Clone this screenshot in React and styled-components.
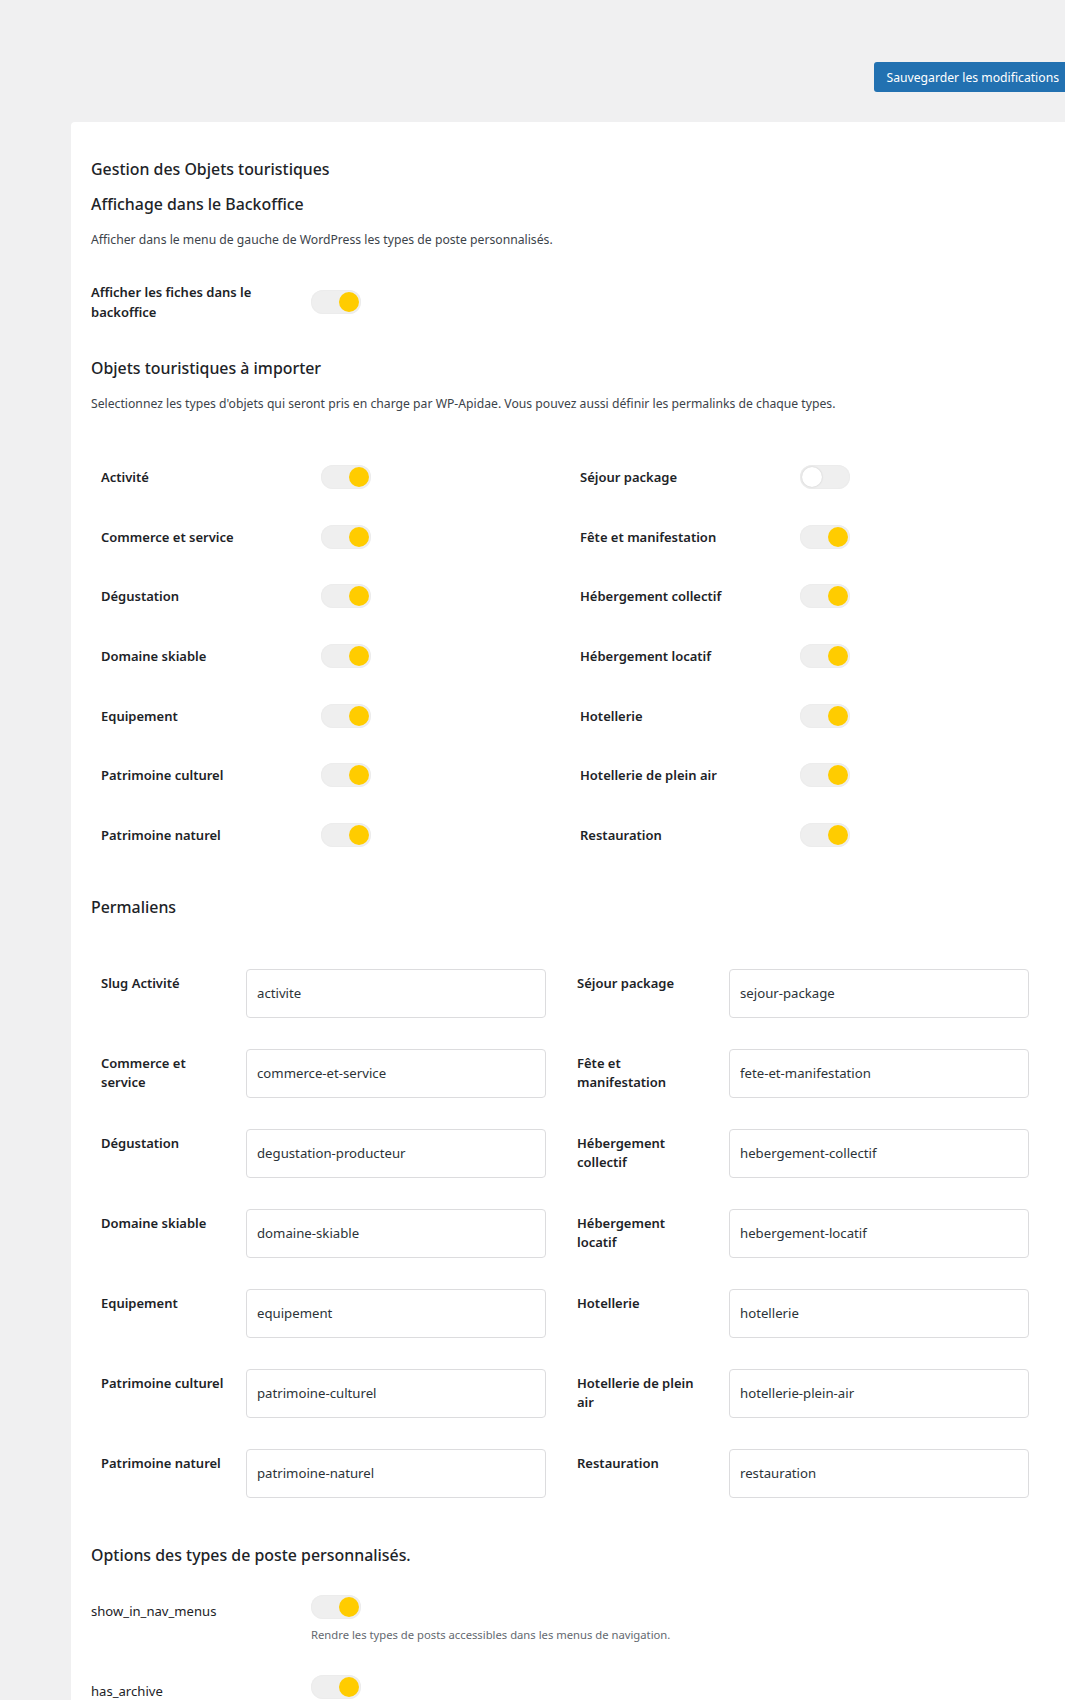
import React from 'react';
import styled, { createGlobalStyle } from 'styled-components';

const GlobalStyle = createGlobalStyle`
  html, body {
    margin: 0;
    padding: 0;
    background: #f0f0f1;
    overflow-x: hidden;
  }
  body {
    font-family: "Noto Sans", "Open Sans", sans-serif;
    color: #1d2327;
  }
  * {
    box-sizing: border-box;
  }
`;

const Page = styled.div`
  width: 1065px;
  overflow: hidden;
  padding-left: 71px;
`;

const Toolbar = styled.div`
  display: flex;
  justify-content: flex-end;
  padding-top: 62px;
  margin-right: -6px;
`;

const SaveButton = styled.button`
  height: 30px;
  padding: 0 12px;
  border: 0;
  border-radius: 3px;
  background: #2271b1;
  color: #fff;
  font-family: inherit;
  font-size: 12.2px;
  white-space: nowrap;
  cursor: pointer;
`;

const Panel = styled.div`
  margin-top: 30px;
  margin-right: -40px;
  background: #fff;
  border-radius: 4px 0 0 0;
  padding: 35px 20px 40px 20px;
`;

const Heading = styled.h2`
  margin: ${(p) => p.$top || 0}px 0 0 0;
  font-size: 15.9px;
  line-height: 24px;
  font-weight: 500;
  color: #1d2327;
`;

const Description = styled.p`
  margin: 14px 0 0 0;
  font-size: 12.2px;
  line-height: 20px;
  color: #3c434a;
`;

const Label = styled.div`
  width: ${(p) => p.$width || 200}px;
  flex-shrink: 0;
  font-size: 13px;
  line-height: 20px;
  font-weight: 600;
  color: #1d2327;
`;

const SettingRow = styled.div`
  display: flex;
  align-items: center;
  margin-top: ${(p) => p.$gap || 0}px;
  gap: 20px;
`;

const Track = styled.span`
  position: relative;
  display: inline-block;
  flex-shrink: 0;
  width: 50px;
  height: 24px;
  border-radius: 12px;
  background: #efefef;
  box-shadow: inset 0 0 0 1px #ececec;
`;

const Knob = styled.span`
  position: absolute;
  top: 2px;
  left: ${(p) => (p.$on ? 28 : 2)}px;
  width: 20px;
  height: 20px;
  border-radius: 50%;
  background: ${(p) => (p.$on ? '#ffcc00' : '#fff')};
  box-shadow: ${(p) => (p.$on ? 'none' : '0 0 2px rgba(0,0,0,0.18)')};
`;

const Toggle = ({ on = true }) => (
  <Track>
    <Knob $on={on} />
  </Track>
);

const ToggleGrid = styled.div`
  display: grid;
  grid-template-columns: 479px 479px;
  grid-auto-rows: 59.7px;
  padding-left: 10px;
  margin-top: 33px;
`;

const ToggleCell = styled.div`
  display: flex;
  align-items: center;
`;

const PermaGrid = styled.div`
  display: grid;
  grid-template-columns: 476px 476px;
  row-gap: 31px;
  padding-left: 10px;
  margin-top: 50px;
`;

const PermaField = styled.div`
  display: grid;
  grid-template-columns: ${(p) => p.$labelWidth}px 300px;
  align-items: start;
`;

const PermaLabel = styled.label`
  padding: 5px ${(p) => p.$padRight}px 0 0;
  font-size: 13px;
  line-height: 19px;
  font-weight: 600;
  color: #1d2327;
`;

const TextInput = styled.input`
  width: 300px;
  height: 49px;
  padding: 0 10px;
  border: 1px solid #dcdcde;
  border-radius: 4px;
  background: #fff;
  font-family: inherit;
  font-size: 13.2px;
  color: #2c3338;
  outline: none;
`;

const OptionRow = styled.div`
  display: flex;
  gap: 20px;
  margin-top: ${(p) => p.$gap}px;
`;

const OptionLabel = styled(Label)`
  padding-top: 6px;
  font-weight: 400;
  font-size: 13.1px;
`;

const OptionControl = styled.div`
  display: flex;
  flex-direction: column;
  align-items: flex-start;
`;

const Help = styled.p`
  margin: 8px 0 0 0;
  font-size: 11.25px;
  line-height: 16px;
  color: #646970;
`;

const objets = [
  ['Activité', true, 'Séjour package', false],
  ['Commerce et service', true, 'Fête et manifestation', true],
  ['Dégustation', true, 'Hébergement collectif', true],
  ['Domaine skiable', true, 'Hébergement locatif', true],
  ['Equipement', true, 'Hotellerie', true],
  ['Patrimoine culturel', true, 'Hotellerie de plein air', true],
  ['Patrimoine naturel', true, 'Restauration', true],
];

const permaliens = [
  ['Slug Activité', 'activite', 'Séjour package', 'sejour-package'],
  ['Commerce et service', 'commerce-et-service', 'Fête et manifestation', 'fete-et-manifestation'],
  ['Dégustation', 'degustation-producteur', 'Hébergement collectif', 'hebergement-collectif'],
  ['Domaine skiable', 'domaine-skiable', 'Hébergement locatif', 'hebergement-locatif'],
  ['Equipement', 'equipement', 'Hotellerie', 'hotellerie'],
  ['Patrimoine culturel', 'patrimoine-culturel', 'Hotellerie de plein air', 'hotellerie-plein-air'],
  ['Patrimoine naturel', 'patrimoine-naturel', 'Restauration', 'restauration'],
];

const App = () => {
  return (
    <>
      <GlobalStyle />
      <Page>
        <Toolbar>
          <SaveButton>Sauvegarder les modifications</SaveButton>
        </Toolbar>
        <Panel>
          <Heading>Gestion des Objets touristiques</Heading>
          <Heading $top={11}>Affichage dans le Backoffice</Heading>
          <Description>
            Afficher dans le menu de gauche de WordPress les types de poste personnalisés.
          </Description>
          <SettingRow $gap={32}>
            <Label $width={200}>Afficher les fiches dans le backoffice</Label>
            <Toggle />
          </SettingRow>

          <Heading $top={34}>Objets touristiques à importer</Heading>
          <Description>
            Selectionnez les types d'objets qui seront pris en charge par WP-Apidae. Vous pouvez
            aussi définir les permalinks de chaque types.
          </Description>
          <ToggleGrid>
            {objets.map(([left, leftOn, right, rightOn]) => (
              <React.Fragment key={left}>
                <ToggleCell>
                  <Label $width={220}>{left}</Label>
                  <Toggle on={leftOn} />
                </ToggleCell>
                <ToggleCell>
                  <Label $width={220}>{right}</Label>
                  <Toggle on={rightOn} />
                </ToggleCell>
              </React.Fragment>
            ))}
          </ToggleGrid>

          <Heading $top={30}>Permaliens</Heading>
          <PermaGrid>
            {permaliens.map(([left, leftSlug, right, rightSlug]) => (
              <React.Fragment key={left}>
                <PermaField $labelWidth={145}>
                  <PermaLabel $padRight={18}>{left}</PermaLabel>
                  <TextInput defaultValue={leftSlug} />
                </PermaField>
                <PermaField $labelWidth={152}>
                  <PermaLabel $padRight={22}>{right}</PermaLabel>
                  <TextInput defaultValue={rightSlug} />
                </PermaField>
              </React.Fragment>
            ))}
          </PermaGrid>

          <Heading $top={45}>Options des types de poste personnalisés.</Heading>
          <OptionRow $gap={28}>
            <OptionLabel $width={200}>show_in_nav_menus</OptionLabel>
            <OptionControl>
              <Toggle />
              <Help>Rendre les types de posts accessibles dans les menus de navigation.</Help>
            </OptionControl>
          </OptionRow>
          <OptionRow $gap={32}>
            <OptionLabel $width={200}>has_archive</OptionLabel>
            <OptionControl>
              <Toggle />
            </OptionControl>
          </OptionRow>
        </Panel>
      </Page>
    </>
  );
};

export default App;
